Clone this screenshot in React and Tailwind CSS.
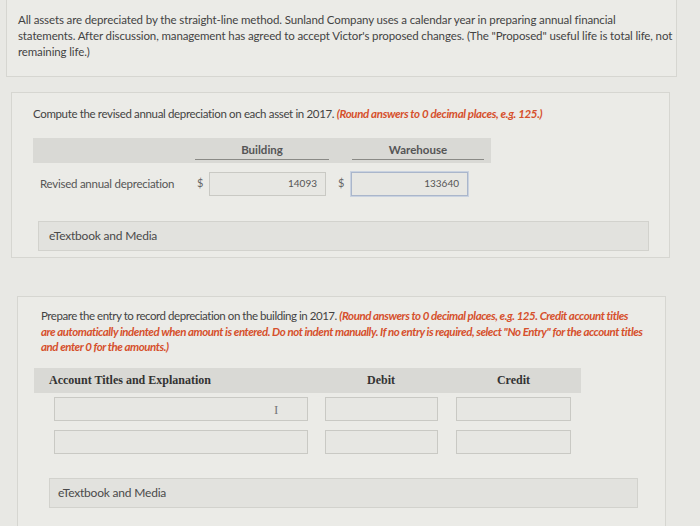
import React from 'react';

const lato = { fontFamily: 'Lato, "Open Sans", sans-serif' };

const Panel = ({ className, children }) => (
  <div className={`border border-[#d6d6d1] bg-[#ebebe7] ${className}`}>{children}</div>
);

const Box = ({ className = '', value, focus }) => (
  <div
    className={`h-[24px] border bg-[#e7e7e3] flex items-center justify-end pr-[8px] text-[10px] text-[#555] ${
      focus ? 'border-[#aab6cb] shadow-[0_0_0_1px_#c9d2e0]' : 'border-[#c9c9c4]'
    } ${className}`}
  >
    {value}
  </div>
);

const TextbookBar = ({ className }) => (
  <div className={`h-[30px] border border-[#d2d2cd] bg-[#e2e2de] flex items-center text-[12px] text-[#4a4a4a] tracking-[-0.2px] ${className}`}>
    eTextbook and Media
  </div>
);

export default function App() {
  return (
    <div className="w-[700px] h-[526px] overflow-hidden bg-[#e8e8e4] text-[#434343]" style={lato}>
      {/* intro */}
      <Panel className="ml-[6px] w-[671px] h-[78px] -mt-px pl-[11px] pt-[12px] pr-[2px]">
        <p className="text-[11.5px] leading-[16px] tracking-[-0.12px] whitespace-nowrap">
          All assets are depreciated by the straight-line method. Sunland Company uses a calendar year in preparing annual financial
          <br />
          statements. After discussion, management has agreed to accept Victor&apos;s proposed changes. (The &quot;Proposed&quot; useful life is total life, not
          <br />
          remaining life.)
        </p>
      </Panel>

      {/* part 1 */}
      <Panel className="ml-[11px] mt-[15px] w-[659px] h-[166px] pl-[21px] pt-[13px]">
        <p className="text-[11.5px] leading-[16px] tracking-[-0.35px]">
          Compute the revised annual depreciation on each asset in 2017.{' '}
          <span className="text-[#d6502c] font-bold italic">(Round answers to 0 decimal places, e.g. 125.)</span>
        </p>

        <div className="mt-[16px] w-[458px] h-[25px] bg-[#d9d9d5] flex items-end pb-[3px]">
          <div className="w-[162px]" />
          <div className="w-[134px] border-b border-[#8a8a86] text-center text-[11.5px] font-bold text-[#555] leading-[18px]">Building</div>
          <div className="w-[23px]" />
          <div className="w-[132px] border-b border-[#8a8a86] text-center text-[11.5px] font-bold text-[#555] leading-[18px]">Warehouse</div>
        </div>

        <div className="mt-[8px] flex items-center h-[25px]">
          <div className="w-[164px] pl-[7px] text-[11.5px] tracking-[-0.25px] text-[#555]">Revised annual depreciation</div>
          <div className="w-[12px] text-[11px] text-[#666]">$</div>
          <Box className="w-[117px]" value="14093" />
          <div className="w-[24px] pl-[12px] text-[11px] text-[#666]">$</div>
          <Box className="w-[117px] ml-[1px]" value="133640" focus />
        </div>

        <TextbookBar className="mt-[25px] ml-[5px] w-[611px] pl-[10px]" />
      </Panel>

      {/* part 2 */}
      <Panel className="ml-[17px] mt-[38px] w-[649px] h-[240px] pl-[16px] pt-[11px]">
        <p className="pl-[7px] text-[11.5px] leading-[15.5px] tracking-[-0.45px] whitespace-nowrap">
          Prepare the entry to record depreciation on the building in 2017.{' '}
          <span className="text-[#d6502c] font-bold italic">
            (Round answers to 0 decimal places, e.g. 125. Credit account titles
            <br />
            are automatically indented when amount is entered. Do not indent manually. If no entry is required, select &quot;No Entry&quot; for the account titles
            <br />
            and enter 0 for the amounts.)
          </span>
        </p>

        <div
          className="mt-[13px] w-[547px] h-[25px] bg-[#d9d9d5] flex items-center text-[12px] font-bold text-[#333]"
          style={{ fontFamily: '"Liberation Serif", "DejaVu Serif", serif' }}
        >
          <div className="w-[290px] pl-[15px]">Account Titles and Explanation</div>
          <div className="w-[114px] text-center">Debit</div>
          <div className="w-[18px]" />
          <div className="w-[115px] text-center">Credit</div>
        </div>

        {[0, 1].map((r) => (
          <div key={r} className={`flex pl-[20px] ${r === 0 ? 'mt-[4px]' : 'mt-[9px]'}`}>
            <div className="relative">
              <Box className="w-[254px]" />
              {r === 0 && (
                <span className="absolute left-[220px] top-[3px] text-[13px] text-[#777]" style={{ fontFamily: '"Liberation Serif", serif' }}>
                  I
                </span>
              )}
            </div>
            <Box className="w-[113px] ml-[17px]" />
            <Box className="w-[115px] ml-[18px]" />
          </div>
        ))}

        <TextbookBar className="mt-[24px] ml-[15px] w-[589px] h-[29px] pl-[8px]" />
      </Panel>
    </div>
  );
}
